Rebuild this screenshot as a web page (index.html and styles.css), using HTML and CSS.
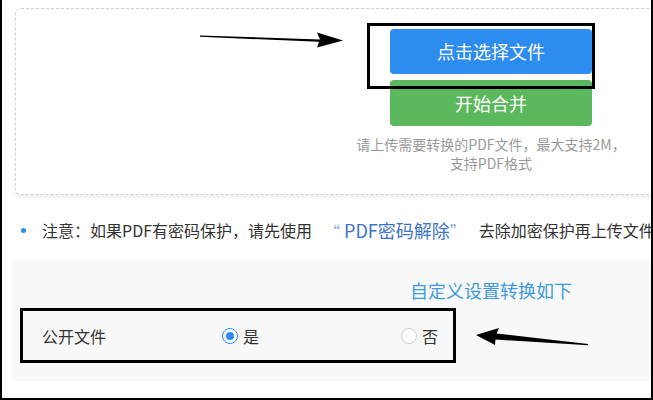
FILE: index.html
```html
<!DOCTYPE html>
<html lang="zh">
<head>
<meta charset="utf-8">
<link rel="stylesheet" href="styles.css">
</head>
<body>
<div class="frame">
  <div class="page">
    <div class="upload">
      <div class="upload-col">
        <button class="btn btn-blue">点击选择文件</button>
        <button class="btn btn-green">开始合并</button>
        <p class="hint">请上传需要转换的PDF文件，最大支持2M，<br>支持PDF格式</p>
      </div>
    </div>
    <div class="notice">
      <span class="dot"></span>
      <span class="notice-text">注意：如果PDF有密码保护，请先使用</span>
      <span class="link"><span class="q">“</span> PDF密码解除<span class="q">”</span></span>
      <span class="notice-text">去除加密保护再上传文件</span>
    </div>
    <div class="settings">
      <div class="settings-title">自定义设置转换如下</div>
      <div class="row">
        <span class="row-label">公开文件</span>
        <label class="opt opt-yes"><span class="radio checked"></span>是</label>
        <label class="opt opt-no"><span class="radio"></span>否</label>
      </div>
    </div>
  </div>
  <div class="mark mark-btn"></div>
  <div class="mark mark-row"></div>
  <svg class="arrow arrow-1" width="160" height="20" viewBox="0 0 160 20">
    <path d="M0 7.5 L120 11.5 L117 4.5 L143 12.5 L117 19.5 L119 13.8 L0 8.8 Z" fill="#000"/>
  </svg>
  <svg class="arrow arrow-2" width="130" height="24" viewBox="0 0 130 24">
    <path d="M2 7 L25 0 L22.5 5.5 L114 16 L114 17.2 L21.5 11.5 L21 17 Z" fill="#000"/>
  </svg>
</div>
</body>
</html>
```
FILE: styles.css
```css
html, body {
  margin: 0;
  padding: 0;
  background: #fff;
}
body {
  font-family: "Noto Sans CJK SC", "Noto Sans", sans-serif;
  color: #333;
}
.frame {
  position: relative;
  width: 653px;
  height: 400px;
  box-sizing: border-box;
  border: 2px solid #000;
  border-top: 0;
  overflow: hidden;
  background: #fff;
}
.page {
  width: 760px;
  padding-left: 10px;
}
.upload {
  margin: 8px 0 0 3px;
  height: 187px;
  border: 1px dashed #d0d0d0;
  border-radius: 6px;
  box-shadow: 0 3px 3px rgba(0,0,0,0.06);
  padding-top: 20px;
  padding-left: 335px;
  box-sizing: border-box;
  background: #fff;
}
.upload-col {
  width: 280px;
  display: flex;
  flex-direction: column;
  align-items: center;
}
.btn {
  width: 202px;
  height: 45px;
  border: 0;
  border-radius: 4px;
  color: #fff;
  font-family: "Noto Sans CJK SC", sans-serif;
  font-size: 18px;
  line-height: 45px;
  padding: 0;
}
.btn-blue {
  background: #2d8cf0;
}
.btn-green {
  margin-top: 6px;
  height: 46px;
  background: #5cb85c;
}
.hint {
  margin: 9px 0 0;
  width: 280px;
  text-align: center;
  font-size: 14px;
  line-height: 19px;
  color: #999;
  white-space: nowrap;
}
.notice {
  display: flex;
  align-items: center;
  white-space: nowrap;
  margin-top: 22px;
  height: 26px;
}
.dot {
  width: 5px;
  height: 5px;
  border-radius: 50%;
  background: #2d8cf0;
  margin-left: 9px;
  margin-right: 16px;
}
.notice-text {
  font-size: 16px;
  color: #333;
}
.link {
  font-size: 18px;
  color: #3b73c9;
  margin: 0 13px 0 12px;
}
.link .q {
  color: #8aa7d6;
  font-size: 16px;
}
.settings {
  margin-top: 17px;
  width: 660px;
  height: 121px;
  background: #f8f8f8;
  box-sizing: border-box;
  padding-top: 17px;
}
.settings-title {
  padding-left: 398px;
  font-size: 18px;
  line-height: 26px;
  color: #3f9be0;
}
.row {
  display: flex;
  align-items: center;
  margin-top: 20px;
  height: 26px;
  font-size: 16px;
  color: #333;
}
.row-label {
  margin-left: 30px;
  width: 180px;
}
.opt {
  display: flex;
  align-items: center;
  gap: 5px;
}
.opt-no {
  margin-left: 142px;
}
.radio {
  width: 16px;
  height: 16px;
  box-sizing: border-box;
  border: 1px solid #ccc;
  border-radius: 50%;
  background: #fff;
  position: relative;
}
.radio.checked {
  border-color: #2d8cf0;
}
.radio.checked::after {
  content: "";
  position: absolute;
  left: 3px;
  top: 3px;
  width: 8px;
  height: 8px;
  border-radius: 50%;
  background: #2d8cf0;
}
.mark {
  position: absolute;
  border: 3px solid #000;
  box-sizing: border-box;
}
.mark-btn {
  left: 365px;
  top: 23px;
  width: 228px;
  height: 66px;
}
.mark-row {
  left: 18px;
  top: 308px;
  width: 436px;
  height: 55px;
}
.arrow {
  position: absolute;
}
.arrow-1 {
  left: 198px;
  top: 28px;
}
.arrow-2 {
  left: 472px;
  top: 328px;
}
```
